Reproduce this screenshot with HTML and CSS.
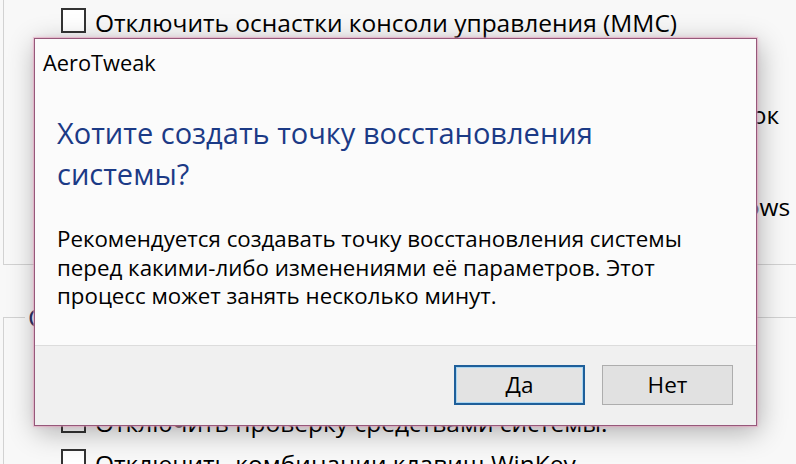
FILE: index.html
```html
<!DOCTYPE html>
<html lang="ru">
<head>
<meta charset="utf-8">
<title>AeroTweak</title>
<link rel="stylesheet" href="styles.css">
</head>
<body>
<div class="bgwin">
  <div class="group group-top">
    <ul class="opts">
      <li class="opt"><span class="box"></span>Отключить оснастки консоли управления (MMC)</li>
      <li class="opt"><span class="box"></span>Отключить редактор системного реестра</li>
      <li class="opt"><span class="box"></span>Запретить изменение фона рабочего стола или заставок</li>
      <li class="opt"><span class="box"></span>Отключить диспетчер задач</li>
      <li class="opt"><span class="box"></span>Отключить Центр Безопасности и Обновления в Windows</li>
    </ul>
  </div>
  <fieldset class="group group-bottom">
    <legend class="caption">Система</legend>
    <ul class="opts opts-tight">
      <li class="opt"><span class="box"></span>Отключить командную строку</li>
      <li class="opt"><span class="box"></span>Отключить проверку средствами системы.</li>
      <li class="opt"><span class="box"></span>Отключить комбинации клавиш WinKey</li>
    </ul>
  </fieldset>
</div>

<div class="dialog">
  <div class="dlg-body">
    <div class="dlg-title">AeroTweak</div>
    <div class="dlg-main">Хотите создать точку восстановления<br>системы?</div>
    <div class="dlg-text">Рекомендуется создавать точку восстановления системы<br>перед какими-либо изменениями её параметров. Этот<br>процесс может занять несколько минут.</div>
  </div>
  <div class="dlg-footer">
    <button class="btn btn-default">Да</button>
    <button class="btn">Нет</button>
  </div>
</div>
</body>
</html>
```
FILE: styles.css
```css
html, body {
  margin: 0;
  padding: 0;
}
body {
  width: 796px;
  height: 464px;
  overflow: hidden;
  position: relative;
  background: #f8f8f8;
  font-family: "Open Sans", "Noto Sans", sans-serif;
  color: #000;
}
.bgwin {
  width: 796px;
  height: 464px;
  overflow: hidden;
}
.group {
  margin: 0 0 0 3px;
  width: 900px;
  border: 1px solid #d2d2d2;
  box-sizing: border-box;
}
.group-top {
  border-top: none;
  height: 265px;
}
.group-bottom {
  margin-top: 34px;
  padding: 0;
  min-width: 0;
  height: 200px;
}
.caption {
  margin-left: 21px;
  padding: 0 3px;
  font-size: 26px;
  line-height: 36px;
  color: #1f2f63;
}
.opts {
  list-style: none;
  margin: 0;
  padding: 0 0 0 57px;
  font-size: 24.5px;
  line-height: 46px;
  white-space: nowrap;
}
.opts-tight {
  margin-top: 26px;
  line-height: 41px;
}
.opt {
  display: flex;
  align-items: baseline;
}
.box {
  width: 25px;
  height: 25px;
  box-sizing: border-box;
  border: 2px solid #333;
  background: #fff;
  margin-right: 9px;
  flex: none;
  position: relative;
  top: 1px;
}

.dialog {
  position: absolute;
  left: 34px;
  top: 38px;
  width: 723px;
  height: 388px;
  box-sizing: border-box;
  border: 1px solid #96587a;
  display: flex;
  flex-direction: column;
  background: #fbfbfb;
  box-shadow: 0 0 0 1px rgba(230, 160, 190, 0.45), 0 0 4px rgba(225, 130, 170, 0.45), 2px 6px 26px rgba(0, 0, 0, 0.3);
}
.dlg-body {
  flex: 1;
  padding: 10px 20px 0 8px;
}
.dlg-title {
  font-size: 21.8px;
  line-height: 28px;
}
.dlg-main {
  margin: 35px 0 0 14px;
  font-size: 29px;
  line-height: 41px;
  color: #1b3a86;
  white-space: nowrap;
}
.dlg-text {
  margin: 31px 0 0 14px;
  font-size: 22.3px;
  line-height: 28.5px;
  white-space: nowrap;
}
.dlg-footer {
  height: 80px;
  box-sizing: border-box;
  border-top: 1px solid #dcdcdc;
  background: #f0f0f0;
  display: flex;
  justify-content: flex-end;
  align-items: flex-start;
  gap: 17px;
  padding: 19px 23px 0 0;
}
.btn {
  width: 131px;
  height: 40px;
  box-sizing: border-box;
  border: 1px solid #adadad;
  background: #e1e1e1;
  font-family: inherit;
  font-size: 22.5px;
  line-height: 1;
  color: #000;
  padding: 0;
  margin: 0;
}
.btn-default {
  border: 2px solid #1f5f9a;
  box-shadow: inset 0 0 0 1px #a9d6f2;
  background: #e3e3e3;
}
```
